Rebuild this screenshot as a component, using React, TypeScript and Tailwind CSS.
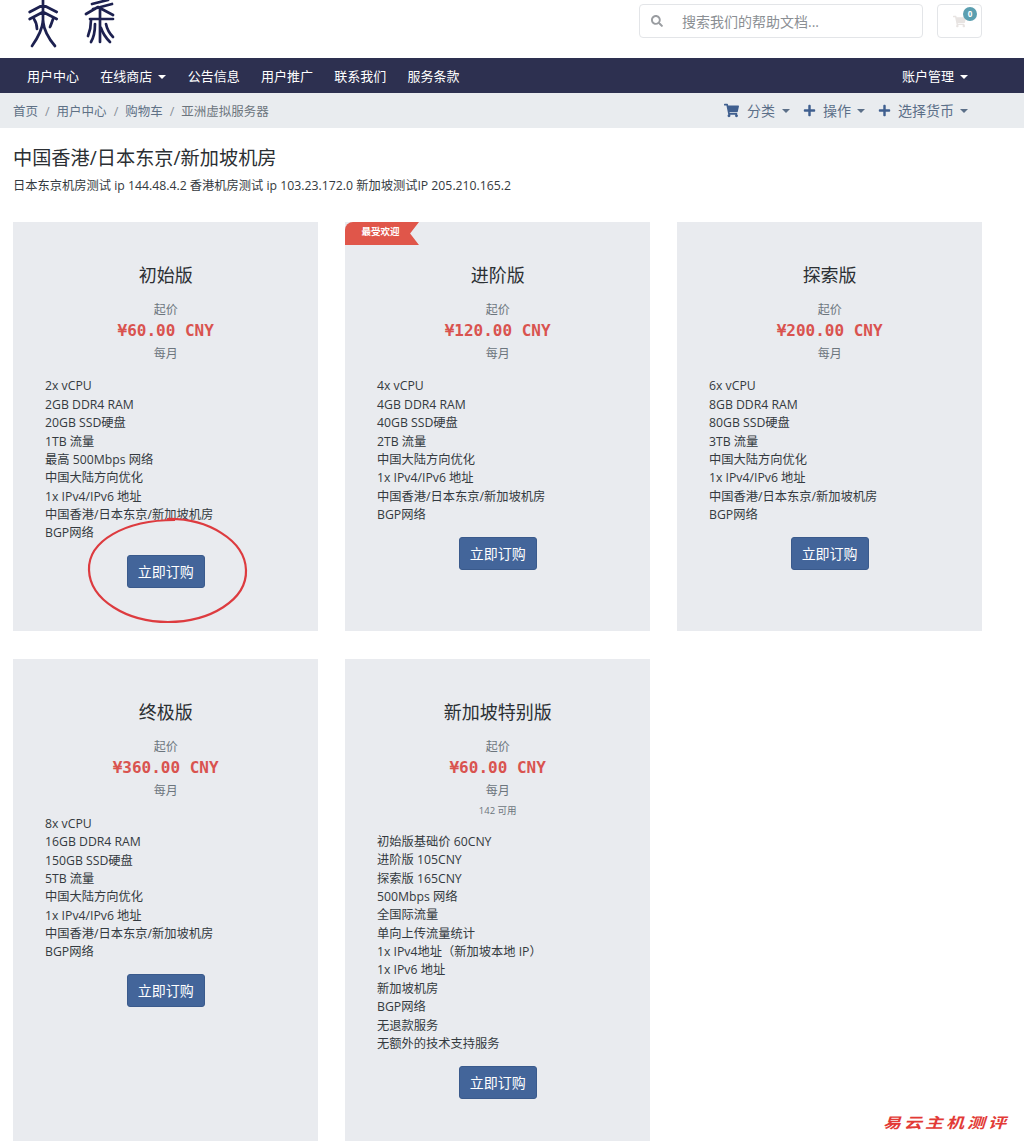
import { FaPlus, FaSearch, FaShoppingCart } from 'react-icons/fa';

interface Plan {
  name: string;
  price: string;
  features: string[];
  popular?: boolean;
  stock?: string;
}

const plans: Plan[] = [
  {
    name: '初始版',
    price: '¥60.00 CNY',
    features: ['2x vCPU', '2GB DDR4 RAM', '20GB SSD硬盘', '1TB 流量', '最高 500Mbps 网络', '中国大陆方向优化', '1x IPv4/IPv6 地址', '中国香港/日本东京/新加坡机房', 'BGP网络'],
  },
  {
    name: '进阶版',
    price: '¥120.00 CNY',
    popular: true,
    features: ['4x vCPU', '4GB DDR4 RAM', '40GB SSD硬盘', '2TB 流量', '中国大陆方向优化', '1x IPv4/IPv6 地址', '中国香港/日本东京/新加坡机房', 'BGP网络'],
  },
  {
    name: '探索版',
    price: '¥200.00 CNY',
    features: ['6x vCPU', '8GB DDR4 RAM', '80GB SSD硬盘', '3TB 流量', '中国大陆方向优化', '1x IPv4/IPv6 地址', '中国香港/日本东京/新加坡机房', 'BGP网络'],
  },
  {
    name: '终极版',
    price: '¥360.00 CNY',
    features: ['8x vCPU', '16GB DDR4 RAM', '150GB SSD硬盘', '5TB 流量', '中国大陆方向优化', '1x IPv4/IPv6 地址', '中国香港/日本东京/新加坡机房', 'BGP网络'],
  },
  {
    name: '新加坡特别版',
    price: '¥60.00 CNY',
    stock: '142 可用',
    features: ['初始版基础价 60CNY', '进阶版 105CNY', '探索版 165CNY', '500Mbps 网络', '全国际流量', '单向上传流量统计', '1x IPv4地址（新加坡本地 IP）', '1x IPv6 地址', '新加坡机房', 'BGP网络', '无退款服务', '无额外的技术支持服务'],
  },
];

const navItems = ['用户中心', '在线商店', '公告信息', '用户推广', '联系我们', '服务条款'];

function Caret({ className }: { className: string }) {
  return <span className={`inline-block w-0 h-0 border-x-[4px] border-x-transparent border-t-[4px] ${className}`} />;
}

function Logo() {
  return (
    <svg width="90" height="48" viewBox="0 0 90 48" fill="none" stroke="#1d2150" strokeWidth="2.7" strokeLinecap="round" strokeLinejoin="round">
      <path d="M16 0v12M2.700 12 16 5l13.700 7M2.700 19 16 12l13.700 7M16 12v9" />
      <path d="M16 21c-1 10-6 18-11 25M16 21c1 10 6 18 12 25M7 19c2 3 3 7 3 10M26 19c-1 3-2 6-3 8" />
      <path d="M65 4 81 0M66 9l19-5M59 14l12-7 15 8M63 19h23M73 9v33" />
      <path d="M64 20c0 6-1 11-3 16M68 24c0 7-1 13-4 18M79 24c1 5 3 9 7 13M74 28c2 6 5 10 9 14" />
    </svg>
  );
}

function PlanCard({ plan }: { plan: Plan }) {
  return (
    <div className="relative bg-[#e9ebef] pt-[41px] pb-[43px] text-center">
      {plan.popular && (
        <div className="absolute left-0 top-0 w-[74px] h-[23px] bg-[#e0564a] rounded-tl-[8px] text-white text-[9.500px] font-bold leading-[20px] pr-[3px] [clip-path:polygon(0_0,100%_0,88%_50%,100%_100%,0_100%)]">
          最受欢迎
        </div>
      )}
      <h3 className="text-[18px] leading-[24px] text-[#2b2f33]">{plan.name}</h3>
      <div className="mt-[14px] text-[12px] leading-[18px] text-[#6c757d]">起价</div>
      <div className="text-[16px] leading-[24px] font-bold text-[#d9534f] font-['DejaVu_Sans_Mono',monospace]">{plan.price}</div>
      <div className="mt-[1px] text-[12px] leading-[20px] text-[#6c757d]">每月</div>
      {plan.stock && <div className="text-[9.500px] leading-[16px] text-[#6c757d] mt-[2px]">{plan.stock}</div>}
      <ul className="mt-[13.400px] px-[32px] text-left text-[12.250px] leading-[18.375px] text-[#343a40]">
        {plan.features.map((f) => (
          <li key={f}>{f}</li>
        ))}
      </ul>
      <button className="mt-[12.600px] w-[78px] h-[33px] rounded-[3px] bg-[#43659a] border border-[#3a5a8c] text-white text-[14px]">
        立即订购
      </button>
    </div>
  );
}

export default function App() {
  return (
    <div className="relative h-[1141px] overflow-hidden bg-white font-['Open_Sans','Noto_Sans_CJK_SC',sans-serif] text-[#212529]">
      <header className="h-[58px] flex items-start pl-[27px] pr-[42px]">
        <Logo />
        <div className="ml-auto mt-[4px] flex gap-[14px]">
          <div className="w-[284px] h-[34px] flex items-center border border-[#e3e5e8] rounded-[4px] pl-[11px] text-[14px] text-[#8b8f94]">
            <FaSearch className="text-[12px] text-[#9a9da1]" />
            <span className="ml-[19px]">搜索我们的帮助文档...</span>
          </div>
          <div className="relative w-[45px] h-[34px] border border-[#e3e5e8] rounded-[4px] flex items-center justify-center">
            <FaShoppingCart className="text-[13px] text-[#e8e4e2]" />
            <span className="absolute right-[4px] top-[2px] w-[14px] h-[14px] rounded-full bg-[#5b9fb0] text-white text-[8px] font-bold leading-[14px] text-center">0</span>
          </div>
        </div>
      </header>

      <nav className="h-[35px] bg-[#2d3050] flex items-center pl-[27px] pr-[56px] pt-[2px] text-[13px] text-white">
        <div className="flex gap-[21.300px]">
          {navItems.map((item) => (
            <span key={item} className="flex items-center">
              {item}
              {item === '在线商店' && <Caret className="ml-[6px] border-t-white" />}
            </span>
          ))}
        </div>
        <span className="ml-auto flex items-center">
          账户管理
          <Caret className="ml-[6px] border-t-white" />
        </span>
      </nav>

      <div className="h-[35px] bg-[#e9ecef] flex items-center pl-[13px] pr-[56px] text-[12.500px] text-[#5f7186]">
        <div className="flex items-center pt-[3px]">
          <span>首页</span>
          <span className="mx-[7px] text-[#8a929a]">/</span>
          <span>用户中心</span>
          <span className="mx-[7px] text-[#8a929a]">/</span>
          <span>购物车</span>
          <span className="mx-[7px] text-[#8a929a]">/</span>
          <span className="text-[#6c757d]">亚洲虚拟服务器</span>
        </div>
        <div className="ml-auto flex items-center gap-[13px] text-[14px] text-[#5b6f88]">
          <span className="flex items-center">
            <FaShoppingCart className="text-[15px] text-[#3f5f8f] mr-[8px]" />
            分类
            <Caret className="ml-[7px] border-t-[#5b6f88]" />
          </span>
          <span className="flex items-center">
            <FaPlus className="text-[13px] text-[#3f5f8f] mr-[7px]" />
            操作
            <Caret className="ml-[6px] border-t-[#5b6f88]" />
          </span>
          <span className="flex items-center">
            <FaPlus className="text-[13px] text-[#3f5f8f] mr-[7px]" />
            选择货币
            <Caret className="ml-[6px] border-t-[#5b6f88]" />
          </span>
        </div>
      </div>

      <main className="pl-[13px] pr-[42px]">
        <h1 className="mt-[16px] text-[19.200px] leading-[28px] text-[#2b2f33]">中国香港/日本东京/新加坡机房</h1>
        <p className="mt-[4px] text-[12.250px] leading-[20px] text-[#343a40]">
          日本东京机房测试 ip 144.48.4.2 香港机房测试 ip 103.23.172.0 新加坡测试IP 205.210.165.2
        </p>
        <div className="mt-[26px] grid grid-cols-[305.330px_305.330px_305.330px] gap-x-[26.670px] gap-y-[28px]">
          {plans.map((plan) => (
            <PlanCard key={plan.name} plan={plan} />
          ))}
        </div>
      </main>

      {/* hand drawn circle over the first order button */}
      <svg className="absolute left-[85px] top-[516px]" width="164" height="110" viewBox="0 0 164 110" fill="none">
        <path d="M82 3C122 2 160 24 161 54c1 30-36 52-78 52C42 106 5 84 4 54 3 25 40 4 90 4" stroke="#dd3b3f" strokeWidth="2.2" />
      </svg>

      <div className="absolute left-[883px] top-[1111px] text-[18px] leading-[22px] tracking-[3px] italic font-bold text-[#e23a36] scale-y-[0.8] font-['Noto_Sans_CJK_SC',sans-serif]">
        易云主机测评
      </div>
    </div>
  );
}
